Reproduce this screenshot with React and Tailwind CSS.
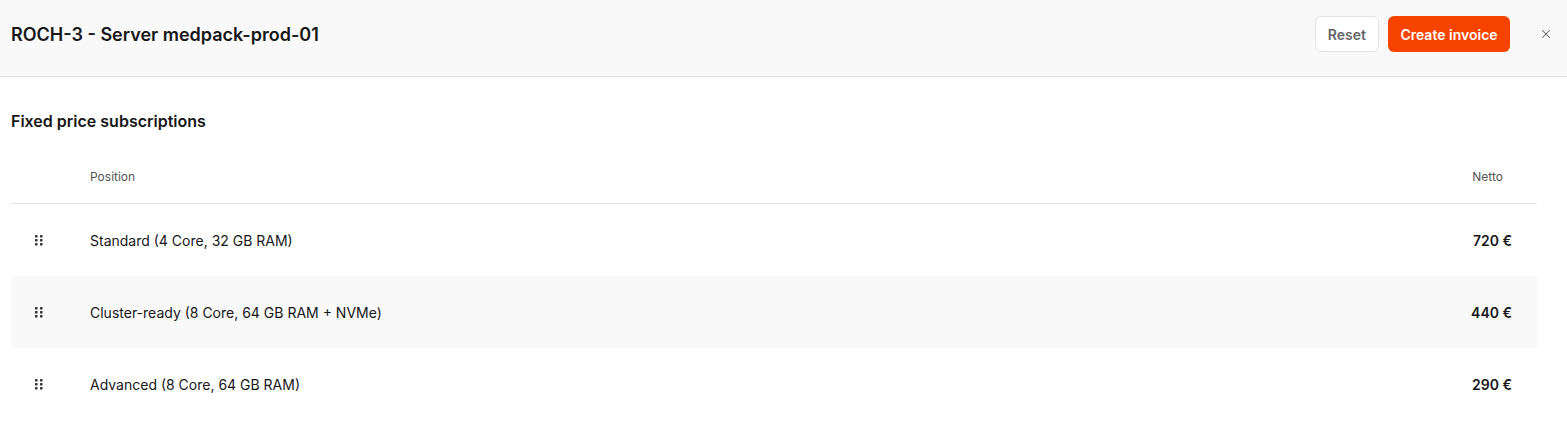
import { X } from "lucide-react";

const ROWS = [
  { name: "Standard (4 Core, 32 GB RAM)", price: "720 €" },
  { name: "Cluster-ready (8 Core, 64 GB RAM + NVMe)", price: "440 €" },
  { name: "Advanced (8 Core, 64 GB RAM)", price: "290 €" },
];

function DragHandle() {
  return (
    <svg width="8" height="11" viewBox="0 0 8 11" className="text-[#333]">
      {[0, 4, 8].map((y) =>
        [0, 5].map((x) => <rect key={`${x}-${y}`} x={x} y={y} width="2.5" height="2.5" rx="0.6" fill="currentColor" />)
      )}
    </svg>
  );
}

export default function App() {
  return (
    <div className="min-h-[425px] bg-white text-[#171717] font-['Inter',sans-serif]">
      {/* Header */}
      <div className="h-[77px] bg-[#f9f9f9] border-b border-[#dedede] flex items-center pl-[11px] pr-[14px]">
        <h1 className="flex-1 text-[18px] font-semibold -mt-[8px]">ROCH-3 - Server medpack-prod-01</h1>
        <div className="flex items-center gap-[9px] -mt-[8px]">
          <button className="h-[36px] px-[12px] rounded-md border border-[#e3e3e3] bg-white text-[14px] font-semibold text-[#666]">Reset</button>
          <button className="h-[36px] w-[122px] rounded-md bg-[#f74300] text-[14px] font-semibold text-white">Create invoice</button>
          <button className="ml-[20px] text-[#666]"><X size={14} strokeWidth={1.8} /></button>
        </div>
      </div>

      {/* Content */}
      <div className="pl-[11px] pr-[30px]">
        <h2 className="mt-[32px] text-[16px] leading-6 font-semibold">Fixed price subscriptions</h2>
        <div className="pt-[36px] pb-[18px] flex items-center border-b border-[#e3e3e3] text-[12px] leading-4 text-[#555]">
          <span className="pl-[79px] flex-1">Position</span>
          <span className="pr-[34px]">Netto</span>
        </div>
        {ROWS.map((r, i) => (
          <div key={r.name} className={`h-[72px] flex items-center text-[14px] ${i === 1 ? "bg-[#f9f9f9]" : ""}`}>
            <div className="w-[79px] pl-[24px] flex items-center"><DragHandle /></div>
            <span className="flex-1">{r.name}</span>
            <span className="pr-[25px] font-semibold">{r.price}</span>
          </div>
        ))}
      </div>
    </div>
  );
}
